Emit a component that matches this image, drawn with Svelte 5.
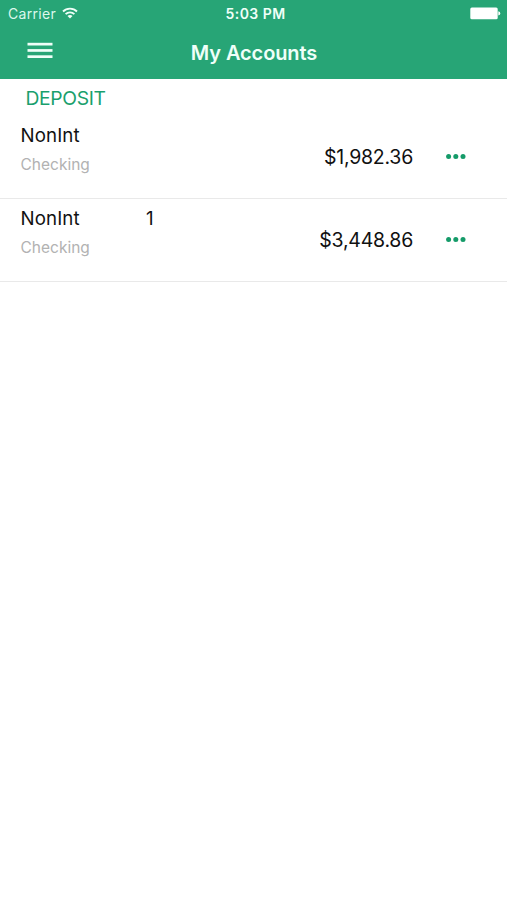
<script>
  const accounts = [
    { name: 'NonInt', suffix: '', type: 'Checking', balance: '$1,982.36' },
    { name: 'NonInt', suffix: '1', type: 'Checking', balance: '$3,448.86' }
  ];
</script>

<div class="screen">
  <header>
    <div class="status">
      <div class="carrier">
        <span class="carrier-name">Carrier</span>
        <svg width="16" height="12" viewBox="0 0 16 12" fill="none" stroke="#effff8" stroke-width="1.8">
          <path d="M1 4.5C4.8 0.6 11.2 0.6 15 4.5" />
          <path d="M3.6 7.2C6 4.8 10 4.8 12.4 7.2" />
          <path d="M8 11.5L5.5 9C6.8 7.7 9.2 7.7 10.5 9Z" fill="#effff8" stroke="none" />
        </svg>
      </div>
      <span class="time">5:03 PM</span>
      <div class="battery">
        <svg width="31" height="13" viewBox="0 0 31 13" fill="#fff">
          <rect x="0.3" y="0.5" width="27.4" height="11.8" rx="1.6" />
          <path d="M28.3 4.3Q30.3 4.8 30.3 6.4T28.3 8.5Z" />
        </svg>
      </div>
    </div>
    <nav>
      <button class="menu" aria-label="Menu">
        <svg width="26" height="17" viewBox="0 0 26 17" fill="#effff8">
          <rect x="0.5" y="0.8" width="25" height="2.7" />
          <rect x="0.5" y="7.1" width="25" height="2.7" />
          <rect x="0.5" y="13.3" width="25" height="2.7" />
        </svg>
      </button>
      <h1>My Accounts</h1>
      <span></span>
    </nav>
  </header>

  <main>
    <h2>DEPOSIT</h2>
    {#each accounts as account}
      <section class="account">
        <div class="info">
          <div class="name">
            <span class="label">{account.name}</span>
            <span class="suffix">{account.suffix}</span>
          </div>
          <span class="type">{account.type}</span>
        </div>
        <span class="balance">{account.balance}</span>
        <button class="more" aria-label="More">
          <svg width="20" height="6" viewBox="0 0 20 6" fill="#159b69">
            <circle cx="2.6" cy="2.5" r="2.5" />
            <circle cx="9.8" cy="2.5" r="2.5" />
            <circle cx="17" cy="2.5" r="2.5" />
          </svg>
        </button>
      </section>
    {/each}
  </main>
</div>

<style>
  :global(body) {
    background: #fff;
  }
  .screen {
    min-height: 900px;
    background: #fff;
    color: #111;
    font-family: Inter, 'Liberation Sans', sans-serif;
  }
  svg {
    display: block;
  }
  button {
    padding: 0;
    border: 0;
    background: none;
  }
  header {
    height: 79px;
    background: #27a576;
    color: #effff8;
  }
  .status {
    display: grid;
    grid-template-columns: 1fr auto 1fr;
    grid-template-rows: 27px;
    height: 27px;
    padding: 0 6px 0 8px;
    align-items: center;
  }
  .carrier {
    display: flex;
    align-items: center;
    gap: 6px;
  }
  .carrier-name {
    font-size: 14px;
    line-height: 27px;
    letter-spacing: 0.3px;
    color: #dcf8ec;
  }
  .carrier svg {
    margin-bottom: 2px;
  }
  .time {
    align-self: start;
    margin-left: 2px;
    font-size: 14px;
    line-height: 28px;
    font-weight: 600;
    letter-spacing: 0.45px;
  }
  .battery {
    display: flex;
    justify-content: flex-end;
  }
  nav {
    display: grid;
    grid-template-columns: 1fr auto 1fr;
    height: 52px;
  }
  .menu {
    justify-self: start;
    align-self: start;
    margin: 15px 0 0 27px;
  }
  h1 {
    margin: 0 0 0 1px;
    font-size: 20px;
    line-height: 53px;
    font-weight: 600;
    letter-spacing: -0.1px;
  }
  h2 {
    height: 37px;
    margin: 0;
    padding-left: 25.5px;
    font-size: 19.3px;
    line-height: 38px;
    font-weight: 400;
    letter-spacing: -0.35px;
    color: #1a9f6d;
  }
  .account {
    display: flex;
    height: 83px;
    box-sizing: border-box;
    padding: 0 41px 0 20.5px;
    border-bottom: 1px solid #e9e9e9;
  }
  .info {
    flex: 1;
  }
  .name {
    display: flex;
    height: 38px;
    font-size: 18.7px;
    line-height: 40px;
    letter-spacing: 0.1px;
  }
  .label {
    width: 125.5px;
  }
  .type {
    display: block;
    font-size: 15.5px;
    line-height: 22px;
    color: #b2b2b2;
  }
  .balance {
    font-size: 19.5px;
    line-height: 83px;
    letter-spacing: -0.25px;
  }
  .more {
    align-self: flex-start;
    margin: 38px 0 0 33px;
  }
</style>
